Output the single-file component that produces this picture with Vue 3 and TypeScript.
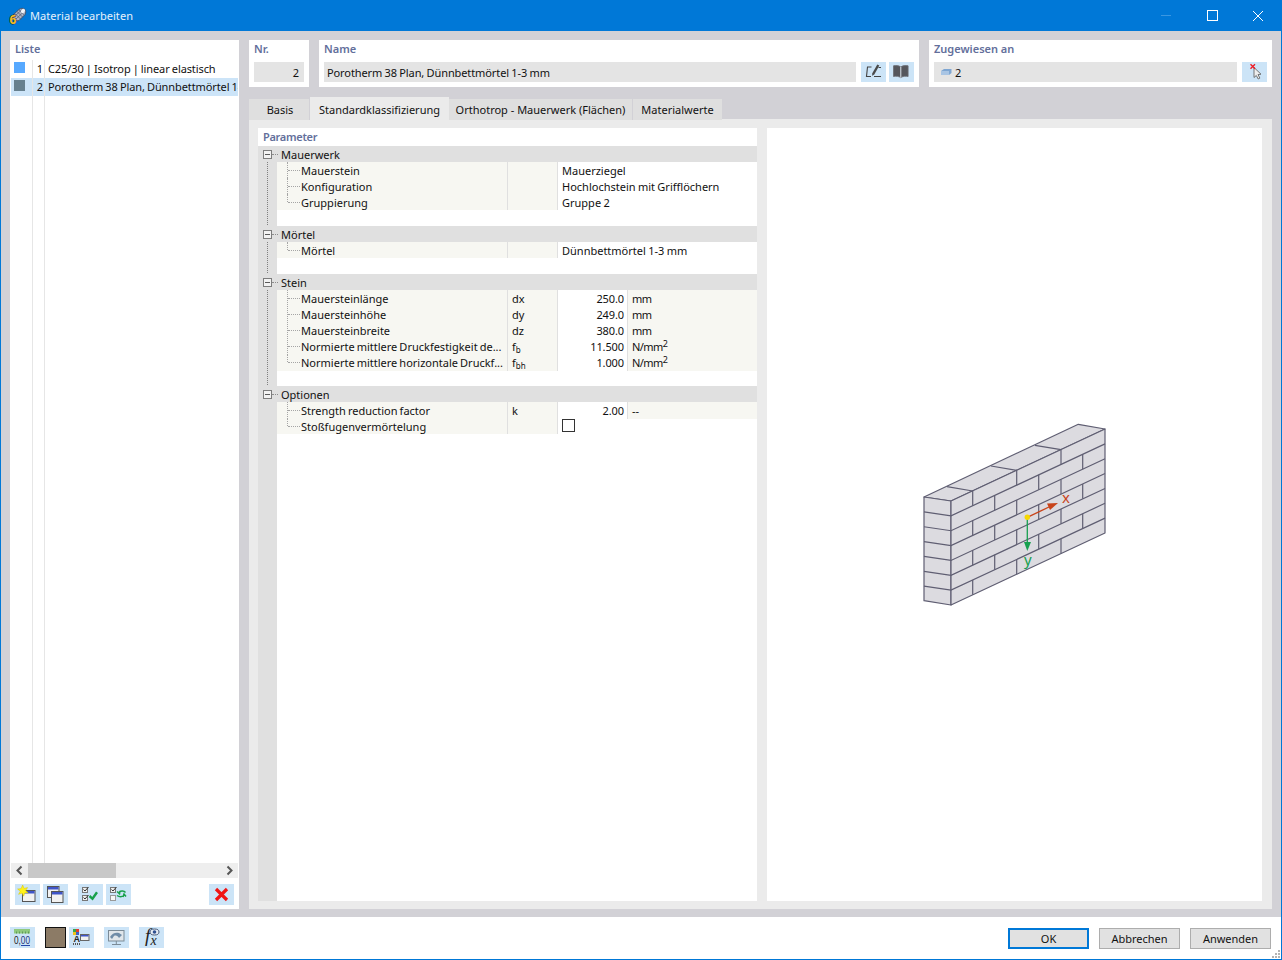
<script setup lang="ts">
interface Row {
  name: string
  sym?: string
  sub?: string
  val?: string
  unit?: string
  sup?: string
  text?: string
  check?: boolean
}

const groups: { title: string; rows: Row[] }[] = [
  {
    title: 'Mauerwerk',
    rows: [
      { name: 'Mauerstein', text: 'Mauerziegel' },
      { name: 'Konfiguration', text: 'Hochlochstein mit Grifflöchern' },
      { name: 'Gruppierung', text: 'Gruppe 2' },
    ],
  },
  { title: 'Mörtel', rows: [{ name: 'Mörtel', text: 'Dünnbettmörtel 1-3 mm' }] },
  {
    title: 'Stein',
    rows: [
      { name: 'Mauersteinlänge', sym: 'dx', val: '250.0', unit: 'mm' },
      { name: 'Mauersteinhöhe', sym: 'dy', val: '249.0', unit: 'mm' },
      { name: 'Mauersteinbreite', sym: 'dz', val: '380.0', unit: 'mm' },
      { name: 'Normierte mittlere Druckfestigkeit de...', sym: 'f', sub: 'b', val: '11.500', unit: 'N/mm', sup: '2' },
      { name: 'Normierte mittlere horizontale Druckf...', sym: 'f', sub: 'bh', val: '1.000', unit: 'N/mm', sup: '2' },
    ],
  },
  {
    title: 'Optionen',
    rows: [
      { name: 'Strength reduction factor', sym: 'k', val: '2.00', unit: '--' },
      { name: 'Stoßfugenvermörtelung', check: true },
    ],
  },
]

const tabs = ['Basis', 'Standardklassifizierung', 'Orthotrop - Mauerwerk (Flächen)', 'Materialwerte']

// Wandgeometrie fuer die Vorschau
const courses = [0, 1, 2, 3, 4, 5, 6]
const H = 14.86
const slope = -72 / 154
const faceY = (x: number, k: number) => 501 + H * k + slope * (x - 951)
const joints = (k: number) => (k % 2 === 0 ? [972.7, 1016.7, 1061] : [994.7, 1038.7, 1082.7])
</script>

<template>
  <div class="window">
    <header class="titlebar">
      <svg class="app-icon" width="20" height="20" viewBox="0 0 20 20">
        <path d="M5 9 11 3.500c2-1.500 4-1.500 5.500-.5s1.500 3.500.5 5.500l-6 6c-1 .5-3 .5-4.500-1S4.500 10.500 5 9z" fill="#aeb4c4" stroke="#3f465c" stroke-width=".8" />
        <path d="M7 7.500l6 6M9 5.500l6 6M11 3.800l5.500 5.500M6 11l9-8.500M8 13l9-8.500" stroke="#4d556e" stroke-width=".7" fill="none" />
        <ellipse cx="15" cy="5" rx="1.800" ry="2.400" fill="#f1f3f8" transform="rotate(40 15 5)" />
        <text x="1.500" y="18" class="six">6</text>
      </svg>
      <span class="title">Material bearbeiten</span>
      <div class="win-btns">
        <span class="win-btn"><i class="min"></i></span>
        <span class="win-btn"><i class="max"></i></span>
        <span class="win-btn">
          <svg width="12" height="12" viewBox="0 0 12 12"><path d="M1 1l10 10M11 1 1 11" stroke="#fff" stroke-width="1" /></svg>
        </span>
      </div>
    </header>

    <main class="main">
      <aside class="list-panel">
        <div class="label list-label">Liste</div>
        <div class="list">
          <div class="list-row">
            <span class="sw-cell"><i class="swatch" style="background: #57a9ff"></i></span>
            <span class="no">1</span>
            <span class="txt">C25/30 | Isotrop | linear elastisch</span>
          </div>
          <div class="list-row selected">
            <span class="sw-cell"><i class="swatch" style="background: #66808f"></i></span>
            <span class="no">2</span>
            <span class="txt">Porotherm 38 Plan, Dünnbettmörtel 1-3 mm</span>
          </div>
          <div class="list-fill"><span></span><span></span></div>
        </div>
        <div class="hscroll">
          <svg width="17" height="15" viewBox="0 0 17 15"><path d="M10.500 3.500 6.500 7.500l4 4" fill="none" stroke="#555" stroke-width="2" /></svg>
          <div class="track"><div class="thumb"></div></div>
          <svg width="17" height="15" viewBox="0 0 17 15"><path d="M6.500 3.500l4 4-4 4" fill="none" stroke="#555" stroke-width="2" /></svg>
        </div>
        <div class="list-tools">
          <button class="ib">
            <svg width="25" height="21" viewBox="0 0 25 21">
              <rect x="7.500" y="6.500" width="12.500" height="11" fill="#f2f2f2" stroke="#555" />
              <rect x="8" y="7" width="11.500" height="2.500" fill="#3f55c8" />
              <path d="M7.700 1l1.300 3.400 3.600-.8-2 3 2.600 2.200-3.500.1-1 3.300L7 9.100 3.600 10.300l1.700-3L2.600 5 6 4.700z" fill="#fff21a" stroke="#d8c600" stroke-width=".5" />
            </svg>
          </button>
          <button class="ib">
            <svg width="25" height="21" viewBox="0 0 25 21">
              <rect x="4.500" y="2.500" width="11.500" height="11" fill="#f2f2f2" stroke="#555" />
              <rect x="5" y="3" width="10.500" height="2.500" fill="#3f55c8" />
              <rect x="8.500" y="7.500" width="11.500" height="11" fill="#f2f2f2" stroke="#555" />
              <rect x="9" y="8" width="10.500" height="2.500" fill="#3f55c8" />
            </svg>
          </button>
          <button class="ib gap-l">
            <svg width="25" height="21" viewBox="0 0 25 21">
              <rect x="4.500" y="3.500" width="5" height="5" fill="#eee" stroke="#777" />
              <rect x="4.500" y="11.500" width="5" height="5" fill="#eee" stroke="#777" />
              <path d="M5.500 5.500l1.500 1.500 3.500-4M5.500 13.500l1.500 1.500 3.500-4" fill="none" stroke="#333" />
              <path d="M11.500 12l3 2.800L19 8.300" fill="none" stroke="#18a04a" stroke-width="2.400" />
            </svg>
          </button>
          <button class="ib">
            <svg width="25" height="21" viewBox="0 0 25 21">
              <rect x="4.500" y="3.500" width="5" height="5" fill="#eee" stroke="#777" />
              <rect x="4.500" y="11.500" width="5" height="5" fill="#f6f6f6" stroke="#999" />
              <path d="M5.500 5.500l1.500 1.500 3.500-4" fill="none" stroke="#333" />
              <path d="M19.500 8.500C18 6.500 15 6.500 13 8M11 7.500l2.500 2.300L14 7M11 11.500c2 1.500 5 1.500 7 0M20 12.500l-2-2.500-1 3" fill="none" stroke="#18a04a" stroke-width="1.500" />
            </svg>
          </button>
          <button class="ib del">
            <svg width="25" height="21" viewBox="0 0 25 21"><path d="M7 5l11 11M18 5 7 16" stroke="#f01414" stroke-width="3.200" /></svg>
          </button>
        </div>
      </aside>

      <section class="right">
        <div class="top-row">
          <div class="box nr">
            <div class="label">Nr.</div>
            <div class="field right-text">2</div>
          </div>
          <div class="box name">
            <div class="label">Name</div>
            <div class="field-row">
              <div class="field grow">Porotherm 38 Plan, Dünnbettmörtel 1-3 mm</div>
              <button class="ib small">
                <svg width="25" height="20" viewBox="0 0 25 20">
                  <path d="M10.500 5H6.500L5.500 14.500H10M13 14.500h7M17.500 5.500H20" fill="none" stroke="#444" stroke-width="1.100" />
                  <path d="M16.300 2.500l2 1-5 9-2.200 1.300.2-2.500z" fill="#4a4a4a" />
                </svg>
              </button>
              <button class="ib small">
                <svg width="25" height="20" viewBox="0 0 25 20">
                  <path d="M11.800 5C10 3.500 7 3.300 4.500 3.800v10.700c2.500-.5 5.300-.3 7.300 1.200 2-1.500 4.800-1.700 7.300-1.200V3.800C16.600 3.300 13.600 3.500 11.800 5z" fill="#55565c" stroke="#6b6c72" stroke-width=".8" />
                  <path d="M11.800 5v10.700" stroke="#dfe8f0" stroke-width="1" />
                </svg>
              </button>
            </div>
          </div>
          <div class="box assign">
            <div class="label">Zugewiesen an</div>
            <div class="field-row">
              <div class="field grow assigned">
                <svg width="11" height="8" viewBox="0 0 11 8"><path d="M0 3l3-2h7.500v4L8 7H0z" fill="#7ea6d2" /><path d="M0 3h8v4H0z" fill="#a9c5e4" /></svg>
                <span>2</span>
              </div>
              <button class="ib small">
                <svg width="25" height="20" viewBox="0 0 25 20">
                  <path d="M12 5.500v10l2.300-2 1.900 3.500 1.700-.9-1.900-3.500 3-.4z" fill="#eee" stroke="#666" stroke-width=".9" />
                  <path d="M8.500 2.300l4.500 4.500M13 2.300 8.500 6.800" stroke="#ee1c25" stroke-width="1.400" />
                </svg>
              </button>
            </div>
          </div>
        </div>

        <nav class="tabs">
          <span v-for="(t, i) in tabs" :key="t" class="tab" :class="{ active: i === 1 }">{{ t }}</span>
        </nav>

        <div class="tab-panel">
          <div class="params">
            <div class="label param-label">Parameter</div>
            <div class="tree">
              <div v-for="g in groups" :key="g.title" class="group">
                <div class="group-head">
                  <span class="toggle"></span>
                  <span class="dash"></span>
                  <span class="group-title">{{ g.title }}</span>
                </div>
                <div v-for="r in g.rows" :key="r.name" class="row">
                  <span class="gutter"></span>
                  <span class="cell c-name"><span class="nm">{{ r.name }}</span></span>
                  <span class="cell c-sym">{{ r.sym }}<sub v-if="r.sub">{{ r.sub }}</sub></span>
                  <span v-if="r.text" class="cell c-text">{{ r.text }}</span>
                  <span v-else-if="r.check" class="cell c-text"><i class="check"></i></span>
                  <template v-else>
                    <span class="cell c-val">{{ r.val }}</span>
                    <span class="cell c-unit" :class="{ plain: r.unit === '--' }">{{ r.unit }}<sup v-if="r.sup">{{ r.sup }}</sup></span>
                  </template>
                </div>
                <div class="spacer"></div>
              </div>
            </div>
          </div>

          <div class="preview">
            <svg class="wall" width="190" height="190" viewBox="920 420 190 190">
              <g fill="#dcdbe0" stroke="#5f5e72" stroke-width="1.200" stroke-linejoin="round">
                <path d="M924 497 951 501 1105 429 1078.300 424.300z" />
                <path d="M924 497 951 501V605L924 600.700z" />
                <path d="M951 501 1105 429V533L951 605z" />
              </g>
              <g stroke="#5f5e72" stroke-width="1.200" fill="none">
                <path d="M947 486.700 972.700 491M991 466 1016.700 470.300M1035 445.400 1061 449.700" />
                <template v-for="k in courses" :key="k">
                  <path v-if="k > 0" :d="`M924 ${497 + H * k}L951 ${501 + H * k}L1105 ${429 + H * k}`" />
                  <path v-for="x in joints(k)" :key="x" :d="`M${x} ${faceY(x, k)}V${faceY(x, k + 1)}`" />
                </template>
              </g>
              <path d="M1027.300 517.300 1050 506.500" stroke="#c8441a" stroke-width="1.300" />
              <path d="M1058 503 1047 503.500 1050 510z" fill="#c8441a" />
              <path d="M1027.300 517.300V544" stroke="#17a04f" stroke-width="1.300" />
              <path d="M1027.300 551 1024 542H1031z" fill="#17a04f" />
              <circle cx="1027.300" cy="517.300" r="2.700" fill="#f6d800" />
              <text x="1062" y="503" class="ax" fill="#c8441a">x</text>
              <text x="1024" y="565" class="ax" fill="#17a04f">y</text>
            </svg>
          </div>
        </div>
      </section>
    </main>

    <footer class="footer">
      <button class="ib foot">
        <svg width="25" height="21" viewBox="0 0 25 21">
          <rect x="4" y="2" width="16" height="4.500" fill="#8fc97e" />
          <path d="M6.500 4.500v2M9.500 4.500v2M12.500 4.500v2M15.500 4.500v2M18.500 4.500v2" stroke="#5f9a58" />
          <text x="4" y="16.500" class="nul" textLength="16" lengthAdjust="spacingAndGlyphs">0,<tspan class="blue">00</tspan></text>
          <path d="M11 18.500h9" stroke="#2646a8" />
        </svg>
      </button>
      <i class="color-swatch"></i>
      <button class="ib foot tight">
        <svg width="25" height="21" viewBox="0 0 25 21">
          <rect x="4" y="2" width="3" height="3" fill="#38a84a" /><rect x="7" y="2" width="3" height="3" fill="#e53a2e" />
          <rect x="4" y="5" width="3" height="3" fill="#f2c318" /><rect x="7" y="5" width="3" height="3" fill="#3a62c9" />
          <text x="4.500" y="14.500" class="aa">A</text>
          <path d="M4 17h7" stroke="#555" stroke-dasharray="1 1" stroke-width="2" />
          <rect x="11.500" y="7.500" width="8.500" height="6" fill="#f2f2f2" stroke="#666" />
          <rect x="12" y="8" width="7.500" height="1.500" fill="#3f55c8" />
        </svg>
      </button>
      <button class="ib foot mid">
        <svg width="25" height="21" viewBox="0 0 25 21">
          <rect x="4.500" y="3.500" width="15.500" height="10.500" fill="#e0e6eb" stroke="#7b8b97" />
          <path d="M6 10c2-4 6-5 9-4l3 2-3 3c-1-2-3-3-5-2l-2 3z" fill="#6f8ca8" />
          <path d="M12.300 14v3M8 17.500h9" stroke="#7b8b97" />
        </svg>
      </button>
      <button class="ib foot mid2">
        <svg width="25" height="21" viewBox="0 0 25 21">
          <text x="6" y="15" class="fx f">f</text>
          <text x="11.500" y="17.500" class="fx">x</text>
          <ellipse cx="15.500" cy="5" rx="4.500" ry="3" fill="#e8edf4" stroke="#4a5a78" />
          <circle cx="15.500" cy="5" r="1.800" fill="#2f4f8f" />
        </svg>
      </button>
      <div class="foot-btns">
        <button class="btn default">OK</button>
        <button class="btn">Abbrechen</button>
        <button class="btn">Anwenden</button>
      </div>
      <svg class="grip" width="10" height="10" viewBox="0 0 10 10">
        <path d="M7 1h2v2H7zM4 4h2v2H4zM7 4h2v2H7zM1 7h2v2H1zM4 7h2v2H4zM7 7h2v2H7z" fill="#b4b4b4" />
      </svg>
    </footer>
  </div>
</template>

<style scoped>
.window {
  width: 1282px;
  height: 960px;
  box-sizing: border-box;
  display: flex;
  flex-direction: column;
  border: 1px solid #0078d7;
  border-top: 0;
  background: #fff;
  font-family: "Noto Sans", sans-serif;
  font-size: 11px;
  color: #111;
  overflow: hidden;
}

.titlebar {
  flex: 0 0 31px;
  display: flex;
  align-items: center;
  background: #0078d7;
  color: #fff;
  padding-left: 7px;
}
.app-icon { flex: none; overflow: visible; }
.six {
  font-family: "Noto Sans", sans-serif;
  font-size: 12px;
  font-weight: 700;
  fill: #f4bd2a;
  stroke: #1c1c1c;
  stroke-width: .8px;
  paint-order: stroke;
}
.title {
  margin-left: 2px;
  font-size: 11px;
  letter-spacing: .05px;
  color: #e6f1fb;
}
.win-btns {
  margin-left: auto;
  display: flex;
}
.win-btn {
  width: 46px;
  height: 31px;
  display: flex;
  align-items: center;
  justify-content: center;
}
.min { width: 10px; height: 1px; background: #3a97e2; }
.max { width: 9px; height: 9px; border: 1px solid #fff; }

.main {
  flex: 1;
  min-height: 0;
  display: flex;
  gap: 10px;
  background: #d2d1d6;
  padding: 9px 9px 8px;
}

.label {
  font-weight: 600;
  color: #636f9b;
  line-height: 18px;
  padding-left: 5px;
}

.list-panel {
  width: 229px;
  flex: none;
  display: flex;
  flex-direction: column;
  background: #fff;
}
.list-label { flex: 0 0 20px; line-height: 18px; }
.list {
  flex: 1;
  min-height: 0;
  display: flex;
  flex-direction: column;
  margin: 0 1px;
}
.list-row {
  flex: 0 0 18px;
  display: flex;
  align-items: center;
  white-space: nowrap;
  overflow: hidden;
  line-height: 18px;
  letter-spacing: -.1px;
  word-spacing: -.6px;
}
.list-row.selected { background: #cce4f8; }
.sw-cell {
  flex: 0 0 18px;
  height: 100%;
  border-right: 1px solid #e6e6e6;
  box-sizing: content-box;
  display: flex;
  align-items: flex-start;
  padding-left: 3px;
}
.swatch { width: 11px; height: 11px; margin-top: 2px; }
.no {
  flex: 0 0 10px;
  height: 100%;
  text-align: right;
  padding-right: 1px;
  border-right: 1px solid #e6e6e6;
}
.txt { padding-left: 3px; }
.list-fill {
  flex: 1;
  display: flex;
  padding-left: 21px;
}
.list-fill span { width: 11px; border-left: 1px solid #e6e6e6; }
.list-fill span + span { width: 0; }

.hscroll {
  flex: 0 0 15px;
  display: flex;
  margin: 0 1px;
  background: #eee;
}
.track { flex: 1; }
.thumb { width: 88px; height: 15px; background: #c8c8c8; }
.list-tools {
  flex: 0 0 31px;
  display: flex;
  align-items: flex-start;
  gap: 3px;
  padding: 6px 5px 0;
  box-sizing: border-box;
}
.ib {
  flex: none;
  width: 25px;
  height: 21px;
  padding: 0;
  border: 0;
  background: #cce4f7;
  display: block;
}
.ib svg { display: block; overflow: visible; }
.gap-l { margin-left: 7px; }
.del { margin-left: auto; }

.right {
  flex: 1;
  min-width: 0;
  display: flex;
  flex-direction: column;
}
.top-row {
  flex: 0 0 47px;
  display: flex;
  gap: 10px;
}
.box {
  background: #fff;
  display: flex;
  flex-direction: column;
  padding: 0 5px;
  box-sizing: border-box;
}
.box .label { flex: 0 0 22px; padding-left: 0; }
.nr { width: 60px; }
.name { width: 600px; }
.assign { flex: 1; }
.field {
  height: 20px;
  line-height: 21px;
  background: #e4e4e4;
  padding: 0 3px;
  box-sizing: border-box;
  white-space: nowrap;
  letter-spacing: -.1px;
  word-spacing: -.4px;
}
.right-text { text-align: right; padding-right: 5px; }
.field-row { display: flex; gap: 3px; }
.field-row .grow { flex: 1; margin-right: 2px; }
.small { height: 20px; }
.assigned {
  display: flex;
  align-items: center;
  gap: 3px;
  padding-left: 7px;
}

.tabs {
  flex: 0 0 32px;
  min-height: 0;
  box-sizing: border-box;
  padding-top: 10px;
  display: flex;
  align-items: flex-start;
}
.tab {
  position: relative;
  z-index: 1;
  height: 21px;
  margin-top: 2px;
  line-height: 21px;
  background: #dfdfdf;
  text-align: center;
  border-right: 1px solid #d2d1d6;
  box-sizing: border-box;
}
.tab:nth-child(1) { width: 61px; padding-left: 2px; }
.tab:nth-child(2) { width: 139px; }
.tab:nth-child(3) { width: 184px; }
.tab:nth-child(4) { width: 89px; border-right: 0; }
.tab.active {
  height: 22px;
  margin-top: 0;
  line-height: 25px;
  background: #ebebeb;
  border-right: 0;
}

.tab-panel {
  flex: 1;
  min-height: 0;
  display: flex;
  gap: 10px;
  background: #ebebeb;
  padding: 9px 10px 8px 9px;
}
.params {
  width: 499px;
  flex: none;
  display: flex;
  flex-direction: column;
  background: #fff;
}
.param-label {
  flex: 0 0 18px;
  letter-spacing: -.3px;
}
.tree {
  flex: 1;
  background: linear-gradient(90deg, #e0e0e0 19px, #fff 19px);
}
.group { position: relative; }
.group:not(:last-child)::before {
  content: "";
  position: absolute;
  left: 9px;
  top: 13px;
  bottom: -3px;
  border-left: 1px dotted #7f7f7f;
}
.group-head {
  height: 16px;
  background: #e0e0e0;
  display: flex;
  align-items: center;
  position: relative;
}
.toggle {
  position: relative;
  z-index: 1;
  width: 9px;
  height: 9px;
  margin-left: 5px;
  border: 1px solid #7d7d7d;
  background: linear-gradient(#5a5a5a, #5a5a5a) center / 5px 1px no-repeat #f2f2f2;
  box-sizing: border-box;
}
.dash {
  width: 6px;
  margin-right: 3px;
  border-top: 1px dotted #8d8d8d;
}
.group-title { line-height: 16px; padding-top: 1px; }
.row {
  display: grid;
  grid-template-columns: 19px 231px 50px 70px 129px;
  height: 16px;
  line-height: 17px;
}
.cell {
  box-sizing: border-box;
  white-space: nowrap;
  overflow: hidden;
}
.c-name {
  position: relative;
  background: #f7f7f2;
  border-right: 1px solid #e0e0e0;
  padding-left: 24px;
  word-spacing: -.8px;
}
.c-name::before {
  content: "";
  position: absolute;
  left: 10px;
  top: 0;
  height: 100%;
  border-left: 1px dotted #a5a5a5;
}
.row:nth-last-child(2) .c-name::before { height: 8px; }
.c-name::after {
  content: "";
  position: absolute;
  left: 11px;
  top: 8px;
  width: 12px;
  border-top: 1px dotted #a5a5a5;
}
.c-sym {
  background: #f7f7f2;
  border-right: 1px solid #e0e0e0;
  padding-left: 4px;
}
.c-sym sub {
  font-size: 8px;
  line-height: 0;
  vertical-align: -2px;
}
.c-val {
  text-align: right;
  padding-right: 3px;
  border-right: 1px solid #e0e0e0;
  letter-spacing: -.1px;
}
.c-unit {
  background: #f7f7f2;
  padding-left: 4px;
  letter-spacing: -.6px;
  overflow: visible;
}
.c-unit.plain { letter-spacing: 0; }
.c-unit sup {
  font-size: 9px;
  line-height: 0;
  vertical-align: 4px;
  letter-spacing: 0;
}
.c-text {
  grid-column: span 2;
  padding-left: 4px;
  word-spacing: -.5px;
}
.check {
  display: block;
  width: 13px;
  height: 13px;
  margin-top: 1px;
  border: 1px solid #333;
  box-sizing: border-box;
  background: #fff;
}
.spacer { height: 16px; }

.preview {
  flex: 1;
  min-width: 0;
  background: #fff;
  display: flex;
  align-items: center;
  justify-content: center;
}
.wall { display: block; }
.ax { font-family: "Noto Sans", sans-serif; font-size: 15px; }

.footer {
  position: relative;
  flex: 0 0 42px;
  box-sizing: border-box;
  display: flex;
  align-items: flex-start;
  padding: 10px 10px 0 9px;
}
.color-swatch {
  flex: none;
  width: 21px;
  height: 21px;
  margin-left: 10px;
  background: #8c7b66;
  border: 1px solid #111;
  box-sizing: border-box;
}
.foot.tight { margin-left: 3px; }
.foot.mid { margin-left: 10px; }
.foot.mid2 { margin-left: 10px; }
.nul { font-family: "Liberation Sans", sans-serif; font-size: 10px; fill: #222; }
.nul .blue { fill: #24367a; }
.aa { font-family: "Liberation Sans", sans-serif; font-size: 9px; font-weight: 700; fill: #222; }
.fx { font-family: "Liberation Serif", serif; font-style: italic; font-size: 14px; fill: #222; }
.fx.f { font-size: 19px; }
.foot-btns {
  margin-left: auto;
  display: flex;
  gap: 10px;
  margin-top: 1px;
}
.btn {
  width: 81px;
  height: 21px;
  padding: 0;
  background: #e1e1e1;
  border: 1px solid #adadad;
  font: inherit;
  color: #111;
}
.btn.default { border: 2px solid #0078d7; }
.grip {
  position: absolute;
  right: 0;
  bottom: 0;
}
</style>
